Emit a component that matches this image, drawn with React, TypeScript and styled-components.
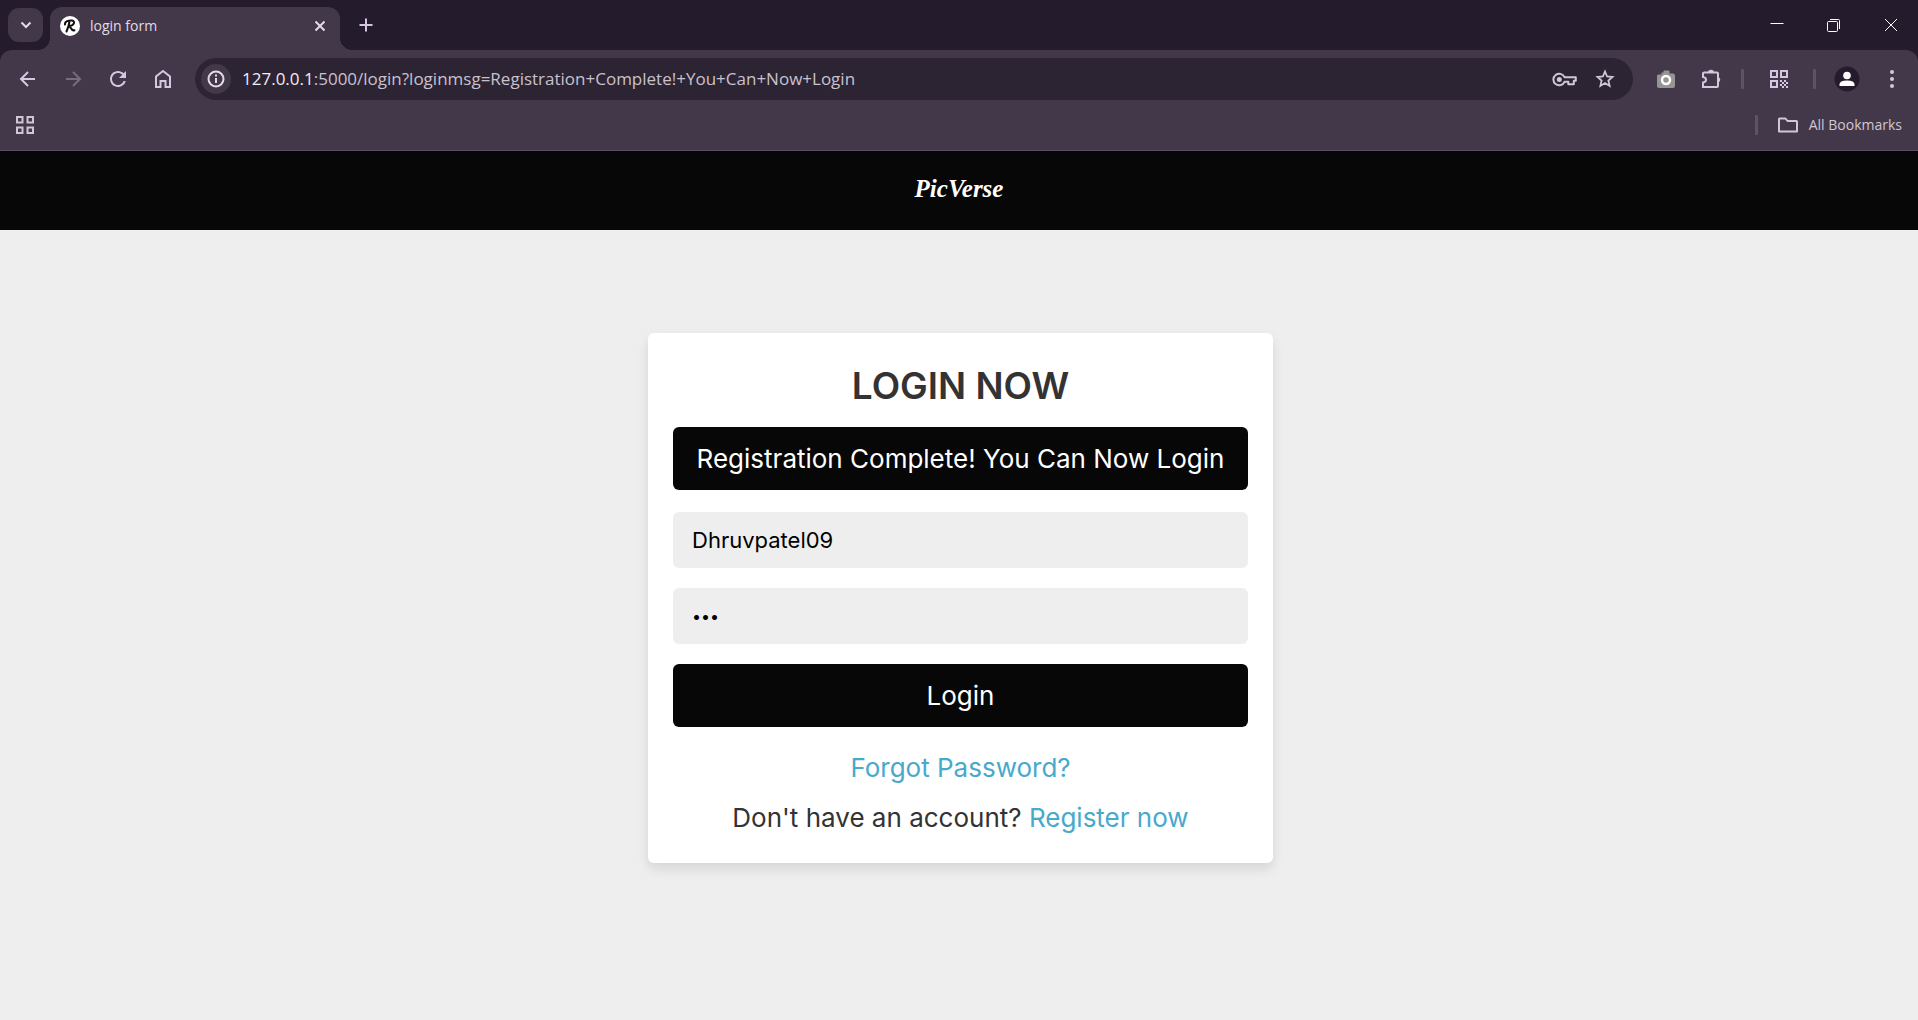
import React, { useState } from "react";
import styled, { createGlobalStyle } from "styled-components";

const ui = '"Open Sans", "Noto Sans", sans-serif';
const site = 'Inter, "Open Sans", sans-serif';

const c = {
  frame: "#241c2c",
  toolbar: "#43374a",
  field: "#2c2433",
  icon: "#d6c6e1",
  light: "#e2dbe5",
  muted: "#cfc7d3",
  divider: "#5f5268",
  ink: "#070707",
  page: "#eeeeee",
  link: "#47a9cc",
};

const GlobalStyle = createGlobalStyle`
  *, *::before, *::after { box-sizing: border-box; }
  html, body, #root { height: 100%; }
  body { margin: 0; background: ${c.page}; font-family: ${site}; }
  button, input { font-family: inherit; }
`;

const Shell = styled.div`
  min-height: 100%;
  display: flex;
  flex-direction: column;
`;

/* Browser chrome */
const Chrome = styled.div`
  background: ${c.frame};
  font-family: ${ui};
  color: ${c.light};
`;

const TabStrip = styled.div`
  height: 50px;
  display: flex;
  align-items: center;
  padding-left: 8px;
`;

const IconButton = styled.button<{ $w?: number; $h?: number; $color?: string; $bg?: string; $radius?: number }>`
  flex: none;
  width: ${(p) => p.$w ?? 45}px;
  height: ${(p) => p.$h ?? 34}px;
  display: flex;
  align-items: center;
  justify-content: center;
  padding: 0;
  border: 0;
  border-radius: ${(p) => p.$radius ?? 0}px;
  background: ${(p) => p.$bg ?? "transparent"};
  color: ${(p) => p.$color ?? c.icon};
  svg { display: block; flex: none; }
`;

const Tab = styled.div`
  position: relative;
  align-self: flex-end;
  width: 290px;
  height: 43px;
  margin-left: 7px;
  padding: 0 4px 6px 10px;
  display: flex;
  align-items: center;
  background: ${c.toolbar};
  border-radius: 12px 12px 0 0;
  &::before, &::after {
    content: "";
    position: absolute;
    bottom: 0;
    width: 12px;
    height: 12px;
  }
  &::before { right: 100%; background: radial-gradient(circle at 0 0, transparent 12px, ${c.toolbar} 12px); }
  &::after { left: 100%; background: radial-gradient(circle at 100% 0, transparent 12px, ${c.toolbar} 12px); }
`;

const TabTitle = styled.span`
  flex: 1;
  margin-left: 10px;
  font-size: 14px;
  line-height: 20px;
`;

const WindowButtons = styled.div`
  margin-left: auto;
  display: flex;
`;

const Toolbar = styled.div`
  height: 58px;
  display: flex;
  align-items: center;
  padding: 0 4px 0 5px;
  background: ${c.toolbar};
  border-radius: 12px 12px 0 0;
`;

const AddressBar = styled.form`
  flex: 1;
  height: 42px;
  margin: 0 10px;
  padding: 0 8px 0 6px;
  display: flex;
  align-items: center;
  background: ${c.field};
  border-radius: 21px;
`;

const Address = styled.div`
  flex: 1;
  margin-left: 11px;
  font-size: 17px;
  line-height: 24px;
  color: #c9c1cd;
  white-space: nowrap;
  b { font-weight: 400; color: #f1ecf3; }
`;

const Divider = styled.span<{ $gap: number }>`
  flex: none;
  width: 3px;
  height: 20px;
  margin: 0 ${(p) => p.$gap}px;
  border-radius: 1px;
  background: ${c.divider};
`;

const BookmarksBar = styled.div`
  height: 43px;
  display: flex;
  align-items: center;
  justify-content: space-between;
  padding: 0 16px 8px 2px;
  background: ${c.toolbar};
  border-bottom: 1px solid #5a4f60;
`;

const Bookmarks = styled.div`
  display: flex;
  align-items: center;
`;

const AllBookmarks = styled.button`
  display: flex;
  align-items: center;
  gap: 10px;
  padding: 0;
  border: 0;
  background: transparent;
  color: ${c.muted};
  font-size: 14px;
  line-height: 20px;
`;

/* Site */
const Header = styled.header`
  height: 79px;
  flex: none;
  display: flex;
  align-items: center;
  justify-content: center;
  padding-bottom: 4px;
  background: ${c.ink};
`;

const Logo = styled.a`
  color: #ffffff;
  font: italic 700 25px/32px "Liberation Serif", serif;
  text-decoration: none;
`;

const Main = styled.main`
  flex: 1;
  display: flex;
  align-items: center;
  justify-content: center;
  padding: 20px 17px 74px 20px;
`;

const Card = styled.form`
  width: 625px;
  max-width: 100%;
  display: flex;
  flex-direction: column;
  padding: 25px 25px 26px;
  border-radius: 6px;
  background: #ffffff;
  box-shadow: 0 6px 12px rgba(0, 0, 0, 0.1);
  color: #333333;
  text-align: center;
`;

const Title = styled.h1`
  margin: 0 0 13px;
  font-size: 37px;
  line-height: 56px;
  font-weight: 600;
`;

const Notice = styled.div`
  margin-bottom: 22px;
  padding: 12px;
  border-radius: 6px;
  background: ${c.ink};
  color: #ffffff;
  font-size: 26px;
  line-height: 39px;
`;

const Field = styled.input`
  width: 100%;
  height: 56px;
  margin-bottom: 20px;
  padding: 0 19px;
  border: 0;
  border-radius: 6px;
  outline: 0;
  background: ${c.page};
  color: #000000;
  font-size: 22px;
  &[type="password"] { font-size: 16px; }
`;

const Submit = styled.button`
  height: 63px;
  margin-bottom: 22px;
  border: 0;
  border-radius: 6px;
  background: ${c.ink};
  color: #ffffff;
  font-size: 26px;
`;

const Line = styled.p`
  margin: 0;
  font-size: 26px;
  line-height: 38px;
  & + & { margin-top: 12px; }
`;

const Link = styled.a`
  color: ${c.link};
  text-decoration: none;
`;

const Svg = ({ w = 24, h = 24, s = 2, children }: { w?: number; h?: number; s?: number; children: React.ReactNode }) => (
  <svg width={w} height={h} viewBox={`0 0 ${w} ${h}`} fill="none" stroke="currentColor" strokeWidth={s} aria-hidden="true">
    {children}
  </svg>
);

export default function App() {
  const [user, setUser] = useState("Dhruvpatel09");
  const [password, setPassword] = useState("abc");

  return (
    <Shell>
      <GlobalStyle />
      <Chrome>
        <TabStrip>
          <IconButton $w={35} $bg={c.toolbar} $radius={11} $color={c.light} aria-label="Search tabs">
            <Svg><path d="M7.500 9.500 12 14l4.500-4.500" /></Svg>
          </IconButton>
          <Tab>
            <Svg w={20} h={20} s={2}>
              <circle cx="10" cy="10" r="10" fill="#fff" stroke="none" />
              <path d="M5 8.500C4.500 5.500 9 4 12 4.500c3.500.6 2.500 5-3 5.500 2 .5 2 5.500 5.500 4.200M9.500 5.500C9 9 8 12 6.500 15.500" stroke="#111" strokeLinecap="round" />
            </Svg>
            <TabTitle>login form</TabTitle>
            <IconButton $w={32} $h={30} $color={c.light} aria-label="Close tab">
              <Svg><path d="m7.500 7.500 9 9m0-9-9 9" /></Svg>
            </IconButton>
          </Tab>
          <IconButton $w={52} aria-label="New tab">
            <Svg><path d="M12 5.500v13M5.500 12h13" /></Svg>
          </IconButton>
          <WindowButtons>
            <IconButton $w={54} $color="#fff" aria-label="Minimize"><Svg s={1}><path d="M5.500 10.500h13" /></Svg></IconButton>
            <IconButton $w={60} $color="#fff" aria-label="Restore">
              <Svg s={1}>
                <rect x="5.500" y="8.500" width="10" height="10" rx="1" />
                <path d="M8 6.500h8.500q1 0 1 1V16" />
              </Svg>
            </IconButton>
            <IconButton $w={54} $color="#fff" aria-label="Close window"><Svg s={1}><path d="m6 6 12 12M18 6 6 18" /></Svg></IconButton>
          </WindowButtons>
        </TabStrip>

        <Toolbar>
          <IconButton aria-label="Back"><Svg><path d="M19 12H5.500M12 5l-7 7 7 7" /></Svg></IconButton>
          <IconButton aria-label="Forward" $color="#776b80"><Svg><path d="M5 12h13.500M12 5l7 7-7 7" /></Svg></IconButton>
          <IconButton aria-label="Reload">
            <Svg><path fill="currentColor" stroke="none" d="M17.650 6.350C16.200 4.900 14.210 4 12 4c-4.420 0-7.990 3.580-7.990 8s3.570 8 7.990 8c3.730 0 6.840-2.550 7.730-6h-2.080c-.82 2.330-3.040 4-5.650 4-3.310 0-6-2.690-6-6s2.690-6 6-6c1.660 0 3.140.69 4.220 1.780L13 11h7V4l-2.350 2.350z" /></Svg>
          </IconButton>
          <IconButton aria-label="Home"><Svg><path d="M5 20V9.500L12 4l7 5.500V20h-4.500v-6h-5v6z" /></Svg></IconButton>

          <AddressBar onSubmit={(e) => e.preventDefault()}>
            <IconButton type="button" $w={30} $h={30} $radius={15} $bg={c.toolbar} $color={c.light} aria-label="Site information">
              <Svg><circle cx="12" cy="12" r="7.500" /><path d="M12 11v5M12 7.500v2" /></Svg>
            </IconButton>
            <Address><b>127.0.0.1</b>:5000/login?loginmsg=Registration+Complete!+You+Can+Now+Login</Address>
            <IconButton type="button" $w={40} $color={c.muted} aria-label="Passwords">
              <Svg w={26} s={2}>
                <path d="M12.500 10.200a5.800 5.800 0 1 0 0 4.600h3.800v2.500h5.500v-3.500h2v-3.600z" strokeLinejoin="round" />
                <circle cx="7.300" cy="12.500" r="2.500" fill="currentColor" stroke="none" />
              </Svg>
            </IconButton>
            <IconButton type="button" $w={40} $color={c.muted} aria-label="Bookmark this page">
              <Svg><path d="m12 4.500 2.100 5 5.400.5-4.100 3.600 1.200 5.300-4.600-2.800-4.600 2.800 1.200-5.300L4.500 10l5.400-.5z" strokeWidth="1.800" /></Svg>
            </IconButton>
          </AddressBar>

          <IconButton aria-label="Screenshot extension">
            <Svg>
              <path d="M4.500 7.500h3v-2h2v-1q0-1 1-1h4q1 0 1 1v2h3.500q2 0 2 2V19q0 2-2 2H5q-2 0-2-2V9q0-1.500 1.500-1.500z" fill="#969594" stroke="none" />
              <circle cx="12" cy="13" r="4" stroke="#fff" strokeWidth="2.500" />
            </Svg>
          </IconButton>
          <IconButton aria-label="Extensions">
            <Svg>
              <path d="M4.500 5.500H18q1 0 1 1V19q0 1-1 1H4v-4.500q3-.5 3-2.750T4 10V6.500q0-1 1-1" />
              <path d="M9 5.500a3 2.800 0 0 1 6 0zM19 10a2.800 2.800 0 0 1 0 5.500z" fill="currentColor" stroke="none" />
            </Svg>
          </IconButton>
          <Divider $gap={8} />
          <IconButton $w={53} aria-label="QR code">
            <Svg>
              <path d="M4 4h6v6H4zM14 4h6v6h-6zM4 14h6v6H4z" />
              <path d="M13 13h2v2h-2zM17 13h2v2h-2zM15 15h2v2h-2zM19 15h2v2h-2zM13 17h2v2h-2zM17 17h2v2h-2zM15 19h2v2h-2zM19 19h2v2h-2z" fill="currentColor" stroke="none" />
            </Svg>
          </IconButton>
          <Divider $gap={8} />
          <IconButton aria-label="Profile">
            <Svg w={26} h={26}>
              <circle cx="13" cy="13" r="12.500" fill={c.frame} stroke="none" />
              <circle cx="13" cy="9.500" r="3.800" fill="#fff" stroke="none" />
              <path d="M5.500 20v-1.500q0-4 7.500-4t7.500 4V20z" fill="#fff" stroke="none" />
            </Svg>
          </IconButton>
          <IconButton aria-label="Menu">
            <Svg>
              <g fill="currentColor" stroke="none">
                <circle cx="12" cy="5" r="2" /><circle cx="12" cy="12" r="2" /><circle cx="12" cy="19" r="2" />
              </g>
            </Svg>
          </IconButton>
        </Toolbar>

        <BookmarksBar>
          <IconButton $color={c.muted} aria-label="Tab groups">
            <Svg><path d="M4 4h5.500v5.500H4zM14.500 4H20v5.500h-5.500zM4 14.500h5.500V20H4zM14.500 14.500H20V20h-5.500z" /></Svg>
          </IconButton>
          <Bookmarks>
            <Divider $gap={19} />
            <AllBookmarks>
              <Svg w={22}><path d="M2 18.500V6q0-.5.500-.5H8.500l2 2.500h9q.5 0 .5.500v10z" strokeLinejoin="round" /></Svg>
              All Bookmarks
            </AllBookmarks>
          </Bookmarks>
        </BookmarksBar>
      </Chrome>

      <Header>
        <Logo href="#">PicVerse</Logo>
      </Header>

      <Main>
        <Card onSubmit={(e) => e.preventDefault()}>
          <Title>LOGIN NOW</Title>
          <Notice role="status">Registration Complete! You Can Now Login</Notice>
          <Field aria-label="Username" value={user} onChange={(e) => setUser(e.target.value)} />
          <Field aria-label="Password" type="password" value={password} onChange={(e) => setPassword(e.target.value)} />
          <Submit type="submit">Login</Submit>
          <Line><Link href="#">Forgot Password?</Link></Line>
          <Line>Don't have an account? <Link href="#">Register now</Link></Line>
        </Card>
      </Main>
    </Shell>
  );
}
